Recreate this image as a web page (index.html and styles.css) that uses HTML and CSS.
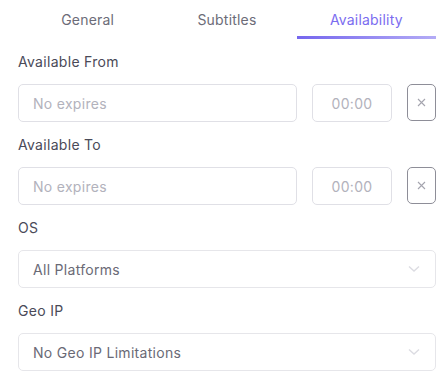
FILE: index.html
```html
<!DOCTYPE html>
<html lang="en">
<head>
    <meta charset="UTF-8">
    <meta name="viewport" content="width=device-width, initial-scale=1.0">
    <title>Availability</title>
    <link rel="stylesheet" href="styles.css">
</head>
<body>
    <div class="tabs">
        <div class="tab">General</div>
        <div class="tab">Subtitles</div>
        <div class="tab active">Availability</div>
    </div>

    <div class="field">
        <label>Available From</label>
        <div class="date-row">
            <input type="text" class="date" placeholder="No expires">
            <input type="text" class="time" placeholder="00:00">
            <button class="clear" type="button" aria-label="Clear">
                <svg width="9" height="9" viewBox="0 0 9 9"><path d="M1 1l7 7M8 1l-7 7" stroke="#a4a4ae" stroke-width="1.1"/></svg>
            </button>
        </div>
    </div>

    <div class="field">
        <label>Available To</label>
        <div class="date-row">
            <input type="text" class="date" placeholder="No expires">
            <input type="text" class="time" placeholder="00:00">
            <button class="clear" type="button" aria-label="Clear">
                <svg width="9" height="9" viewBox="0 0 9 9"><path d="M1 1l7 7M8 1l-7 7" stroke="#a4a4ae" stroke-width="1.1"/></svg>
            </button>
        </div>
    </div>

    <div class="field">
        <label>OS</label>
        <div class="select">
            <span>All Platforms</span>
            <svg width="12" height="8" viewBox="0 0 12 8"><path d="M1 1.5l5 4.5 5-4.5" fill="none" stroke="#dcdce2" stroke-width="1.4"/></svg>
        </div>
    </div>

    <div class="field">
        <label>Geo IP</label>
        <div class="select">
            <span>No Geo IP Limitations</span>
            <svg width="12" height="8" viewBox="0 0 12 8"><path d="M1 1.5l5 4.5 5-4.5" fill="none" stroke="#dcdce2" stroke-width="1.4"/></svg>
        </div>
    </div>
</body>
</html>
```
FILE: styles.css
```css
body {
    font-family: Inter, "Noto Sans", sans-serif;
    margin: 0;
    padding: 0 8px 0 18px;
    background: #fff;
    color: #4a4a58;
}
.tabs {
    display: grid;
    grid-template-columns: 1fr 1fr 1fr;
    height: 39px;
}
.tab {
    text-align: center;
    font-size: 14px;
    color: #6c6c78;
    padding-top: 11px;
    box-sizing: border-box;
    letter-spacing: 0.2px;
}
.tab.active {
    color: #7b6cf0;
    border-bottom: 3px solid transparent;
    border-image: linear-gradient(90deg, #7566ee, #b4acf6) 1;
}
.field {
    margin-top: 14px;
}
label {
    display: block;
    font-size: 14px;
    color: #4a4a58;
    letter-spacing: 0.3px;
    line-height: 17px;
    margin-bottom: 14px;
}
.date-row {
    display: flex;
    gap: 15px;
    height: 38px;
}
input {
    font-family: inherit;
    font-size: 14px;
    border: 1px solid #e0e0e6;
    border-radius: 5px;
    box-sizing: border-box;
    height: 38px;
    padding: 0 14px;
    outline: none;
    letter-spacing: 0.3px;
}
input::placeholder {
    color: #b2b2bc;
}
.date {
    width: 279px;
}
.time {
    width: 80px;
    text-align: center;
}
.clear {
    display: flex;
    align-items: center;
    justify-content: center;
    width: 29px;
    height: 37px;
    border: 1px solid #8e8e98;
    border-radius: 5px;
    background: #fff;
    padding: 0;
}
.select {
    display: flex;
    align-items: center;
    justify-content: space-between;
    height: 38px;
    box-sizing: border-box;
    border: 1px solid #e6e6ea;
    border-radius: 5px;
    padding: 0 15px 0 14px;
    font-size: 14px;
    color: #6a6a76;
    letter-spacing: 0.3px;
}
```
